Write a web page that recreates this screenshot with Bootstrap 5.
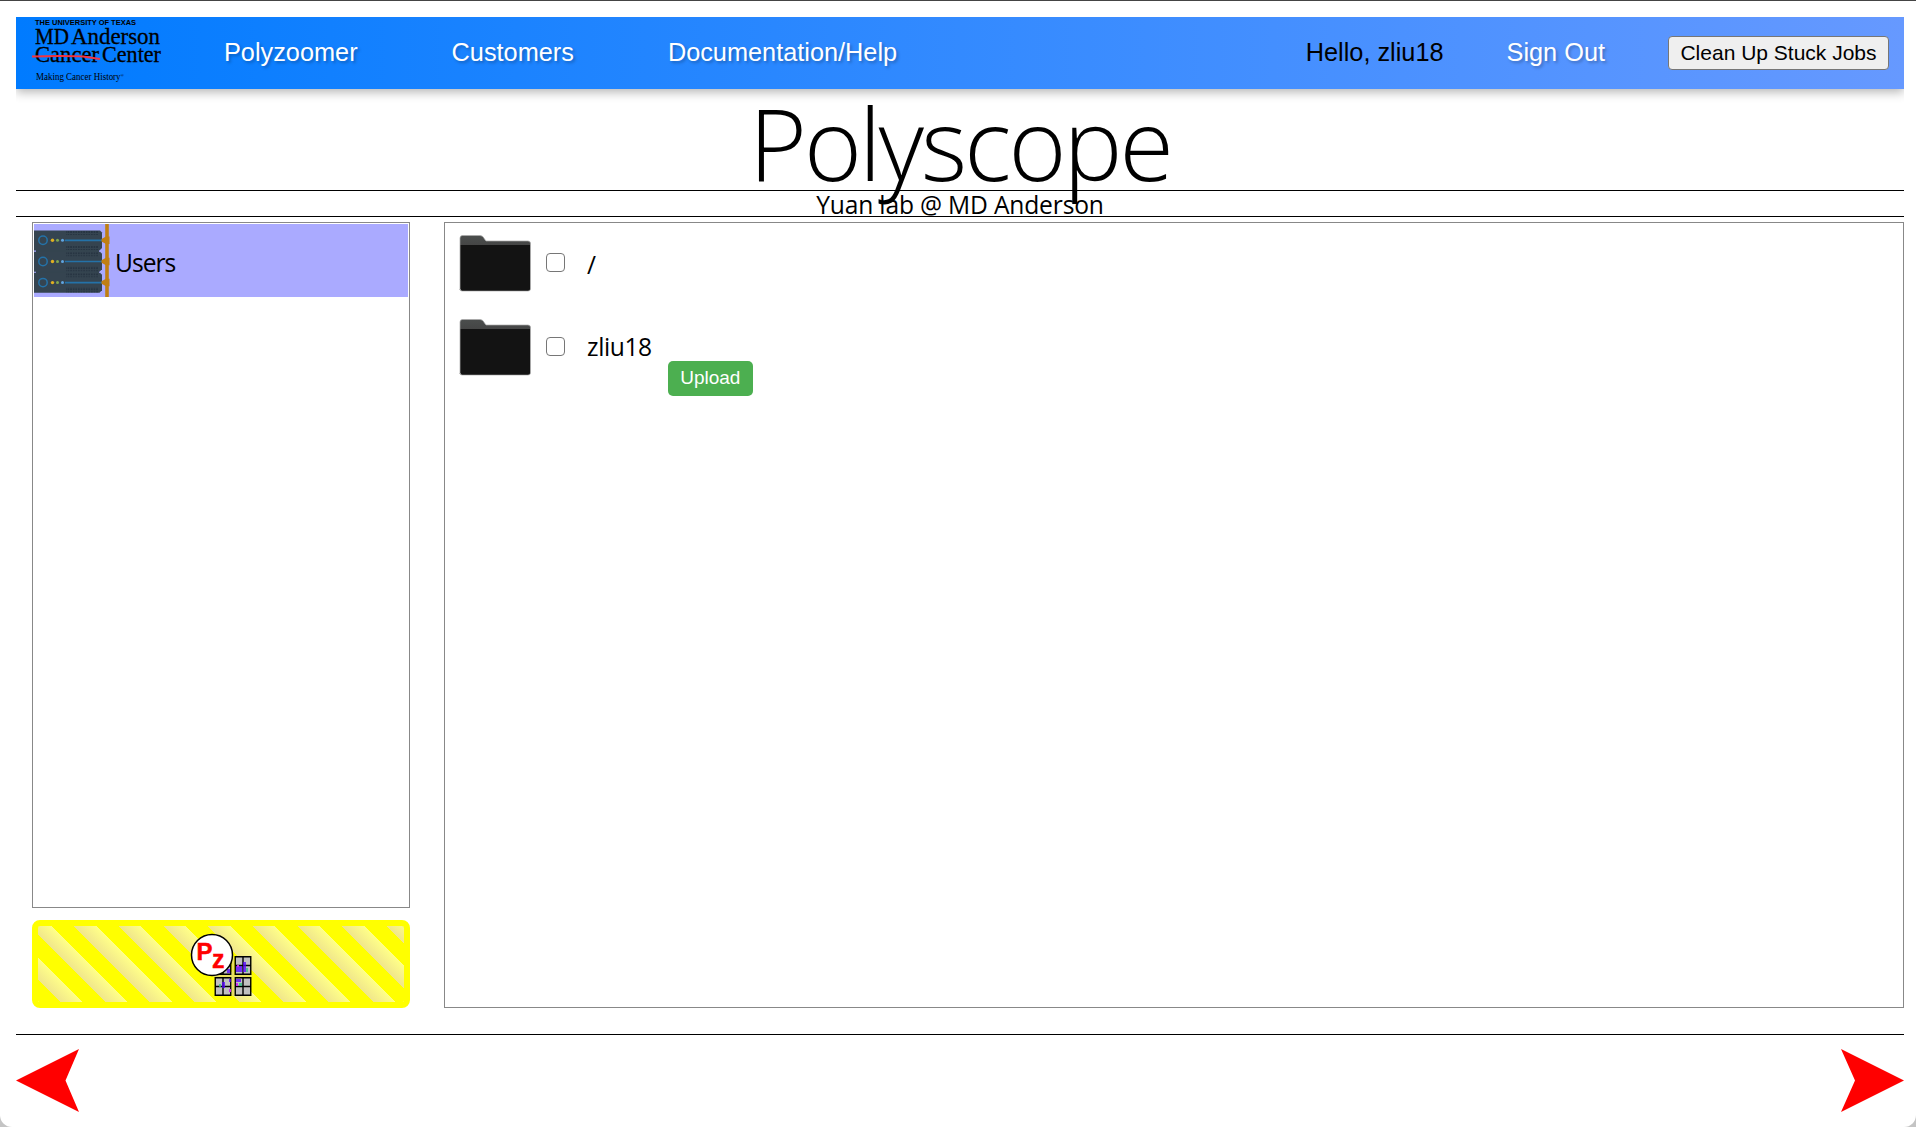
<!DOCTYPE html>
<html lang="en">
<head>
<meta charset="utf-8">
<title>Polyscope</title>
<link href="https://cdn.jsdelivr.net/npm/bootstrap@5.3.0/dist/css/bootstrap.min.css" rel="stylesheet">
<style>
html{height:100%;background:#c4c4c4}
body{height:1127px;margin:0;padding:16px 12px 0 16px;background:#fff;color:#000;font-family:"Open Sans",sans-serif;font-size:24.6px;line-height:1.2;border-top:1px solid #444;border-radius:0 0 12px 12px;overflow:hidden}
.topbar{height:72px;background:linear-gradient(90deg,#007bff,#6699ff);box-shadow:0 3px 10px rgba(0,0,0,.3);clip-path:inset(0 0 -20px 0);font-family:"Liberation Sans",Arial,sans-serif;font-size:25.3px;padding:0 15px 0 16px}
.topbar .nav-link{color:#fff;padding:0;text-shadow:2px 2px 3px rgba(0,0,0,.25);line-height:28px}
.logo{width:134px;height:72px;margin-right:58px}
.menu{gap:94px;padding-bottom:2px}
.account{gap:63px}
.account>span,.account>a{padding-bottom:2px!important}
.cleanbtn{font:21px/30px "Liberation Sans",Arial,sans-serif;height:34px;width:221px;padding:0;background:#efefef;border:1px solid #767676;border-radius:4px;color:#000}
.brand{height:101px;font-size:99px;font-weight:300;line-height:107px;letter-spacing:-2.9px;text-align:center;position:relative;z-index:1}
.brand span{display:inline-block;white-space:nowrap}
.tagline{height:27px;border-top:1px solid #000;border-bottom:1px solid #000;line-height:27px;letter-spacing:-.17px;text-align:center}
.workspace{height:786px;margin-top:5px;padding-left:16px;gap:34px}
.side{width:378px;gap:12px}
.pane{border:1px solid #888}
.userrow{height:73px;background:#aaf;margin:1px;gap:5px}
.uname{letter-spacing:-1px;padding-top:4px}
.filelist{padding:12px 15px}
.filerow{height:84px}
.folder{width:72px;height:58px;margin-left:-1px}
.check{appearance:none;width:19px;height:19px;border:1px solid #767676;border-radius:4px;margin:18px 22px 0 15px;background:#fff}
.fname{line-height:30px;margin-top:15px}
.filerow+.filerow .fname{margin-top:13px;letter-spacing:-.4px}
.uploadbtn{width:85px;height:35px;padding:0;border:0;border-radius:5px;background:#4caf50;color:#fff;font:19px/32px "Liberation Sans",Arial,sans-serif;padding-bottom:2px;margin:42px 0 0 16px}
.zoombtn{height:88px;border:6px solid #ff0;border-radius:8px;padding:0;background:repeating-linear-gradient(45deg,#ff0 0,#ff0 15.8px,#f0e68c 15.8px,#ffff88 31.6px) padding-box #ff0}
.pager{margin-top:26px;border-top:1px solid #000;padding-top:14px}
</style>
</head>
<body>
<header class="topbar d-flex align-items-center">
  <svg class="logo" viewBox="32 17 134 72" font-family="Liberation Serif,serif">
    <text x="35" y="24.500" font-family="Liberation Sans,sans-serif" font-weight="700" font-size="7" textLength="101" lengthAdjust="spacingAndGlyphs">THE UNIVERSITY OF TEXAS</text>
    <g font-size="24" stroke="#000" stroke-width=".3">
      <text x="35" y="43.500" textLength="34" lengthAdjust="spacingAndGlyphs">MD</text>
      <text x="71" y="43.500" textLength="89" lengthAdjust="spacingAndGlyphs">Anderson</text>
      <text x="35" y="62" textLength="64" lengthAdjust="spacingAndGlyphs">Cancer</text>
      <text x="102" y="62" textLength="59" lengthAdjust="spacingAndGlyphs">Center</text>
    </g>
    <path d="M32 56.500Q45 56 60 56T83 56.500L100 59" fill="none" stroke="#f5333f" stroke-width="2"/>
    <text x="36" y="79.500" font-size="10" textLength="88" lengthAdjust="spacingAndGlyphs">Making Cancer History<tspan font-size="5" dy="-3">®</tspan></text>
  </svg>
  <nav class="menu d-flex">
    <a class="nav-link" href="#">Polyzoomer</a>
    <a class="nav-link" href="#">Customers</a>
    <a class="nav-link" href="#">Documentation/Help</a>
  </nav>
  <div class="account d-flex align-items-center ms-auto">
    <span>Hello, zliu18</span>
    <a class="nav-link" href="#">Sign Out</a>
    <button class="cleanbtn">Clean Up Stuck Jobs</button>
  </div>
</header>
<h1 class="brand mb-0"><span>Polyscope</span></h1>
<div class="tagline">Yuan lab @ MD Anderson</div>
<main class="workspace d-flex">
  <aside class="side d-flex flex-column">
    <div class="pane flex-grow-1">
      <div class="userrow d-flex align-items-center">
        <svg width="76" height="73" viewBox="34 224 76 73">
          <defs>
            <pattern id="vents" width="2.600" height="3" patternUnits="userSpaceOnUse"><rect width="1.700" height="2" fill="#273542"/></pattern>
            <g id="unit">
              <path d="M34 230.500H100L102 232.500V248L99.500 250.500H34Z" fill="#354450"/>
              <path d="M66 231H98V235H66ZM66 245H98V250H66Z" fill="url(#vents)"/>
              <circle cx="43" cy="240.300" r="4.200" fill="none" stroke="#2472a8" stroke-width="1.500"/>
              <path d="M65 240.300H104" stroke="#2472a8" stroke-width="1.700"/>
              <circle cx="52.500" cy="240.300" r="1.700" fill="#e0b020"/><circle cx="57.500" cy="240.300" r="1.500" fill="#7fa850"/><circle cx="62.500" cy="240.300" r="1.500" fill="#5fa4e0"/>
            </g>
            <path id="plug" d="M101.500 239L106 236.500H109.500V244H106L101.500 241.500Z" fill="#c07f12"/>
          </defs>
          <path d="M36 248H99V290H36Z" fill="#35444f"/>
          <use href="#unit"/><use href="#unit" y="21.200"/><use href="#unit" y="42.300"/>
          <path d="M107 224V297" stroke="#c07f12" stroke-width="3.600"/>
          <use href="#plug"/><use href="#plug" y="21.200"/><use href="#plug" y="42.300"/>
        </svg>
        <span class="uname">Users</span>
      </div>
    </div>
    <button class="zoombtn d-flex justify-content-center" aria-label="Polyzoomer">
      <svg width="84" height="76" viewBox="179 926 84 76">
        <defs><g id="tile"><path d="M.75.75H16.250V18.250H.75ZM8.500.75V18.250M.75 9.500H16.250" fill="#c0c0c0" stroke="#000" stroke-width="1.400"/></g></defs>
        <path d="M213 976H252M233 957V996" stroke="#e8e060" stroke-width="2"/>
        <use href="#tile" x="214.500" y="956"/><use href="#tile" x="234.500" y="956"/><use href="#tile" x="214.500" y="977"/><use href="#tile" x="234.500" y="977"/>
        <path d="M236 966h6v6h-6zM243 962v10h3v-10zM227 969h3v4h-3zM222 982h3v6h-3zM236 979h5v3h-5zM229 979h2v3h-2z" fill="#50f" opacity=".75"/>
        <path d="M246 968h2v4h-2zM219 984h2v3h-2zM239 983h3v3h-3z" fill="#3b8" opacity=".8"/>
        <path d="M237 965h2v2h-2zM229 989h2v3h-2zM236 983h2v3h-2z" fill="#c3e"/>
        <circle cx="212" cy="955" r="20.500" fill="#fff" stroke="#000" stroke-width="1.500"/>
        <g fill="#f00" stroke="#f00" stroke-width=".5" font-family="Liberation Sans,sans-serif" font-weight="700"><text x="196.500" y="960" font-size="24">P</text><text x="212" y="968" font-size="25">z</text></g>
      </svg>
    </button>
  </aside>
  <section class="pane flex-grow-1 filelist">
    <div class="filerow d-flex align-items-start">
      <svg class="folder" viewBox="0 0 72 58"><use href="#dir"/>
        <defs><linearGradient id="tab" x2="0" y2="1"><stop stop-color="#4b4e4d"/><stop offset=".2" stop-color="#444"/></linearGradient>
        <g id="dir"><path d="M1 55V3Q1 .500 3.500.500H21Q24 .500 25.500 4L27 6H69Q71.500 6 71.500 8.500V54Q71.500 56 69 56H3Q1 56 1 54Z" fill="url(#tab)" stroke="#aaa" stroke-width=".7"/><path d="M1.700 10H71V53.500Q71 55.500 69 55.500H3.500Q1.700 55.500 1.700 53.500Z" fill="#131313"/></g></defs>
      </svg>
      <input class="check" type="checkbox" aria-label="root">
      <span class="fname">/</span>
    </div>
    <div class="filerow d-flex align-items-start">
      <svg class="folder" viewBox="0 0 72 58"><use href="#dir"/></svg>
      <input class="check" type="checkbox" aria-label="zliu18">
      <span class="fname">zliu18</span>
      <button class="uploadbtn">Upload</button>
    </div>
  </section>
</main>
<footer class="pager d-flex justify-content-between">
  <svg width="63" height="63" viewBox="0 0 63 63"><path d="M0 31.500L63 0L49.500 31.500L63 63Z" fill="red"/></svg>
  <svg width="63" height="63" viewBox="0 0 63 63"><path d="M63 31.500L0 0L14 31.500L0 63Z" fill="red"/></svg>
</footer>
<script src="https://cdn.jsdelivr.net/npm/bootstrap@5.3.0/dist/js/bootstrap.bundle.min.js"></script>
</body>
</html>
